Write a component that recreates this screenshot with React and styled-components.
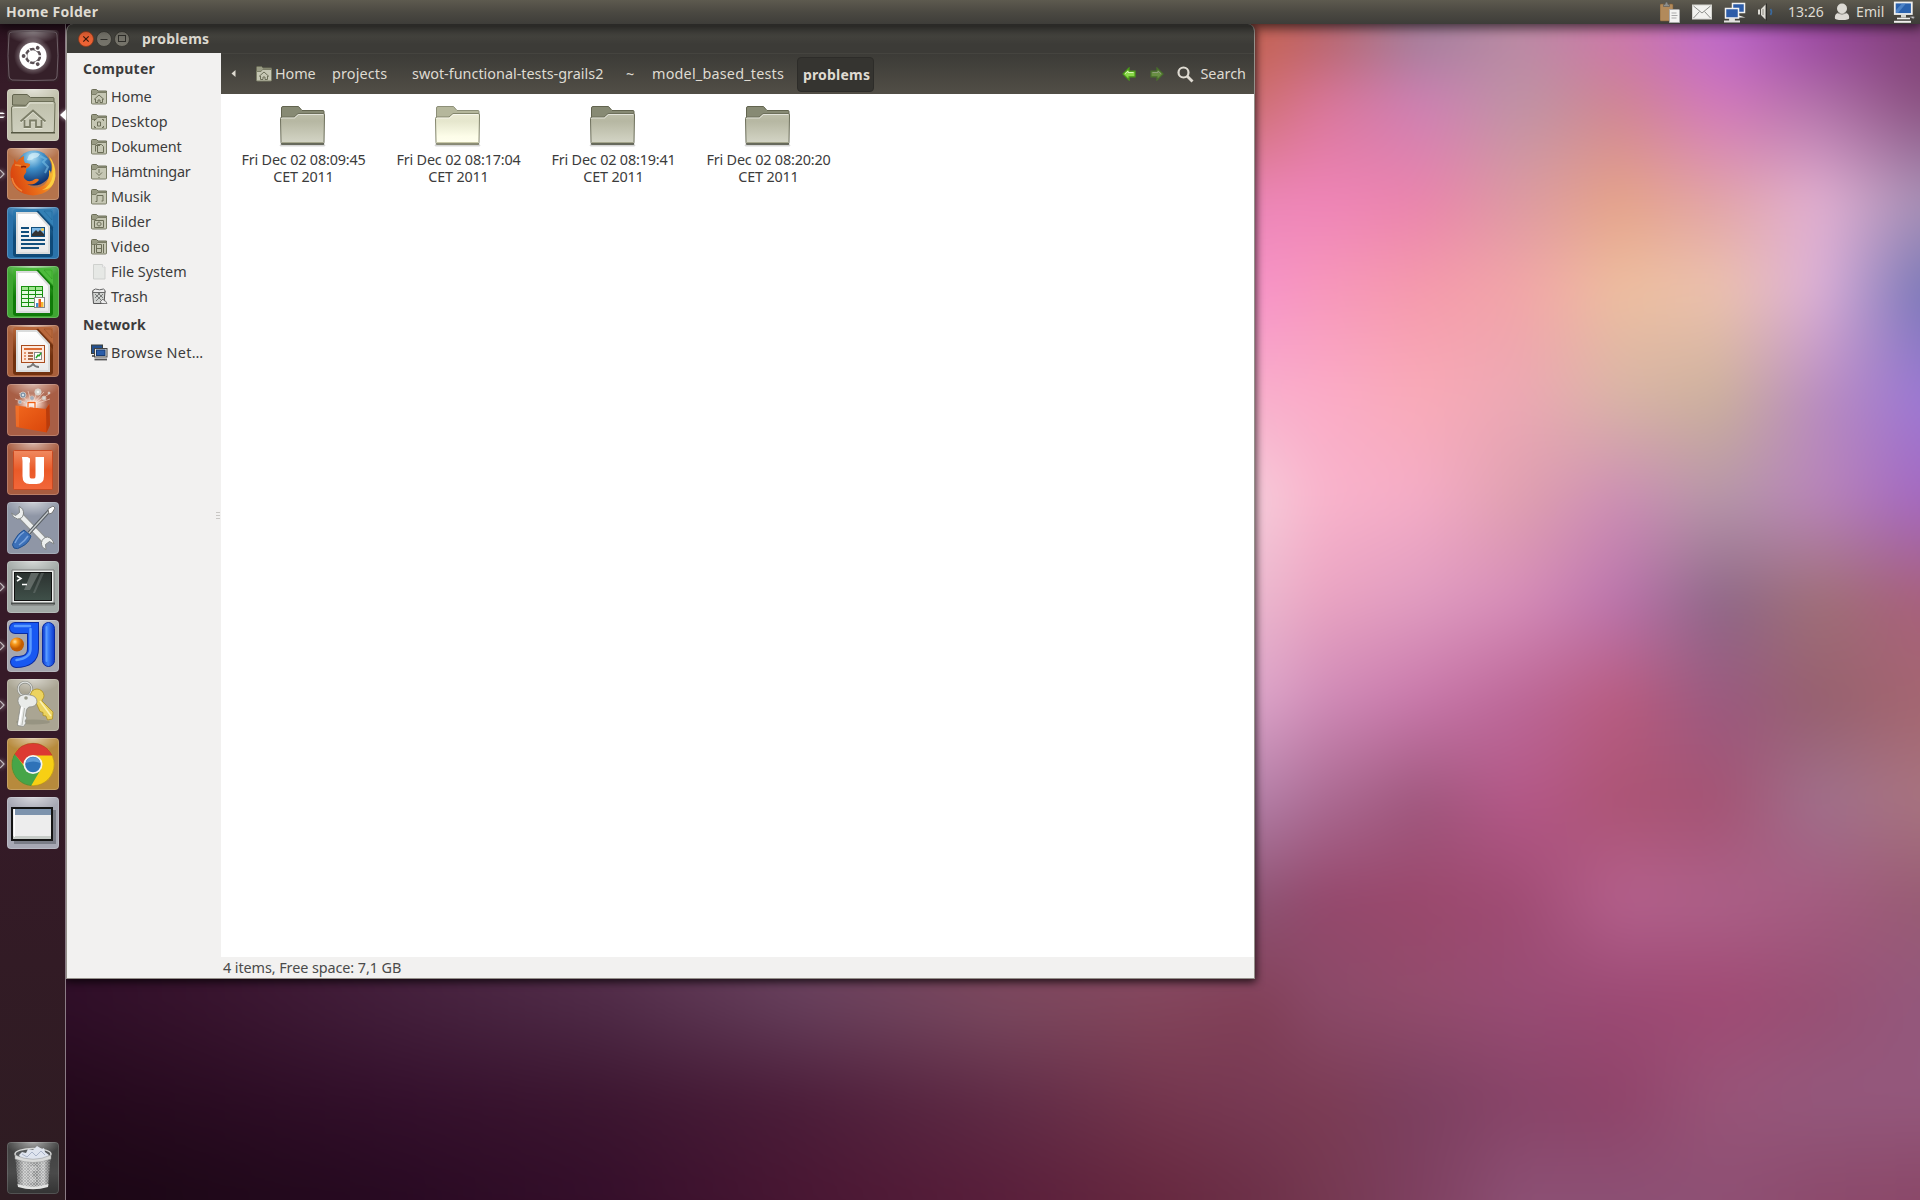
import React from "react";
import styled, { createGlobalStyle } from "styled-components";

const Global = createGlobalStyle`
  *, *::before, *::after { box-sizing: border-box; }
  html, body { margin: 0; padding: 0; overflow: hidden; background: #2a0f22; }
  body { font-family: "Noto Sans", "Open Sans", sans-serif; font-size: 14.4px; color: #3c3c3c; }
  svg { display: block; flex: none; }
`;

/* ---------- Wallpaper ---------- */

const COLS = [0, 200, 400, 600, 800, 1000, 1160, 1260, 1320, 1420, 1520, 1620, 1720, 1820, 1920];
const MESH = [
  [40, "200818 34102c 4a2040 603050 704060 803850 a85050 c86454 b9646a a37f9c bb8aa4 cc78a8 be6acb 9a48a0 7f4076"],
  [100, "200818 34102c 4a2040 603050 704060 803850 b86060 cf7072 d97597 cc80b4 bd93a5 cf8494 d277bc b070a8 8a5080"],
  [200, "200818 34102c 4a2040 603050 704060 803850 e080b0 ec86b6 ef84b8 ea84ac dc9aa2 e5a388 e2a4a8 e2b0d2 a890b4"],
  [290, "200818 34102c 4a2040 603050 704060 803850 f090c0 f794c8 f797bc f59aac f2a6a8 eebf9f ecc2ae dcb0d8 7a78b8"],
  [400, "200818 34102c 4a2040 603050 704060 803850 f0b0cc f9b0cc fbacc8 f9abb8 eca8b4 d8b4a6 cbb09c b98cc0 9c78d4"],
  [500, "200818 34102c 4a2040 603050 704060 803850 f0ccda f6ccda f9b4cc f4acc6 dfa0b0 cc8eb4 b596a8 b884b8 a468c0"],
  [600, "200818 34102c 4a2040 603050 704060 803850 e0b0ce ecb8ce eaa4c2 e09cc0 d68cb8 ba74ac 8e6888 a07078 a8607c"],
  [700, "200818 34102c 4a2040 603050 704060 803850 d0a0c8 dca4c8 d08cb8 c878aa bc6898 b85c80 9a5a80 96606e a46670"],
  [800, "200818 34102c 4a2040 603050 704060 803850 b07ca0 b480a8 ac6c94 a0587e b45888 ac5474 a45474 a0708c a87480"],
  [900, "2a0c24 3a1230 4a2040 603050 704060 803850 8c5070 8e5474 94486c 9a486c a04c74 b4608c ac6088 a45c80 985c74"],
  [1000, "2c0c26 38142e 44203c 502c48 67405c 7b4a60 84465c 824058 8a4a68 924c6c 984c74 9c4a74 a04a74 985074 94587c"],
  [1100, "200818 2a0c22 34102c 3c1630 4c1e3a 602c46 74364e 783a54 7c3c54 7c4060 884468 90446a 985478 94587c 94587c"],
  [1200, "180512 1e0818 280a22 340e2a 481632 581e3a 66283f 6c3048 743850 7e4060 8c5074 8c5074 8e5074 8c4a6c 8a4868"],
];

const WallpaperSvg = styled.svg`
  position: absolute;
  inset: 0;
`;

function Wallpaper() {
  return (
    <WallpaperSvg width="1920" height="1200" viewBox="0 0 1920 1200">
      <defs>
        <filter id="soft" x="0" y="0" width="1" height="1" colorInterpolationFilters="sRGB">
          <feGaussianBlur stdDeviation="20" />
        </filter>
        {MESH.map(([y, colors], i) => {
          const prev = i ? MESH[i - 1][0] : -100;
          return (
            <React.Fragment key={y}>
              <linearGradient id={`row${i}`} gradientUnits="userSpaceOnUse" x1="0" x2="1920" y1="0" y2="0">
                {colors.split(" ").map((c, k) => (
                  <stop key={k} offset={COLS[k] / 1920} stopColor={`#${c}`} />
                ))}
              </linearGradient>
              <linearGradient id={`fade${i}`} gradientUnits="userSpaceOnUse" x1="0" x2="0" y1={prev} y2={y}>
                <stop offset="0" stopColor="#fff" stopOpacity={i ? 0 : 1} />
                <stop offset="1" stopColor="#fff" />
              </linearGradient>
              <mask id={`m${i}`} maskUnits="userSpaceOnUse" x="-100" y={prev} width="2120" height={1400 - prev}>
                <rect x="-100" y={prev} width="2120" height={1400 - prev} fill={`url(#fade${i})`} />
              </mask>
            </React.Fragment>
          );
        })}
      </defs>
      <g filter="url(#soft)">
        {MESH.map(([y], i) => {
          const prev = i ? MESH[i - 1][0] : -100;
          return (
            <rect key={y} x="-100" y={prev} width="2120" height={1400 - prev} fill={`url(#row${i})`} mask={`url(#m${i})`} />
          );
        })}
      </g>
    </WallpaperSvg>
  );
}

/* ---------- Shell ---------- */

const Screen = styled.div`
  position: relative;
  width: 1920px;
  height: 1200px;
  overflow: hidden;
  display: flex;
  flex-direction: column;
`;

const Panel = styled.header`
  position: relative;
  z-index: 3;
  height: 24px;
  flex: none;
  display: flex;
  align-items: center;
  padding: 0 5px 0 6px;
  background: linear-gradient(#5d5a4f, #4b4942 50%, #3e3d39);
  color: #dfdbd2;
  box-shadow: 0 2px 12px 2px rgba(0, 0, 0, 0.65);
`;

const Label = styled.span`
  white-space: nowrap;
  line-height: ${(p) => p.$lh || 20}px;
  font-weight: ${(p) => (p.$bold ? 700 : 400)};
  font-size: ${(p) => p.$size || 14.4}px;
  letter-spacing: ${(p) => p.$ls || 0}px;
`;

const Tray = styled.div`
  margin-left: auto;
  display: flex;
  align-items: center;
`;

const TrayItem = styled.div`
  display: flex;
  align-items: center;
  gap: 6px;
  margin-left: ${(p) => p.$gap}px;
  width: ${(p) => p.$w}px;
`;

const Body = styled.div`
  position: relative;
  flex: 1;
  display: flex;
  align-items: flex-start;
`;

const Launcher = styled.nav`
  position: relative;
  z-index: 1;
  width: 66px;
  height: 1176px;
  flex: none;
  display: flex;
  flex-direction: column;
  gap: 7px;
  padding: 6px 0 6px;
  background: linear-gradient(#2b121f 0, #361b28 60px, #361a28 700px, #2e1c22 1176px);
  border-right: 1px solid #8b7c85;
`;

const Slot = styled.div`
  position: relative;
  height: 52px;
  flex: none;
  padding-left: 7px;
  margin-top: ${(p) => (p.$last ? "auto" : "0")};
`;

const Tile = styled.div`
  width: 52px;
  height: 52px;
  border-radius: 4px;
  overflow: hidden;
  background: radial-gradient(ellipse 28px 14px at 50% 0, rgba(255, 255, 255, 0.55), rgba(255, 255, 255, 0)), ${(p) => p.$bg};
  box-shadow: inset 0 0 0 1px ${(p) => p.$edge || "rgba(255,255,255,.2)"};
`;

const Marker = styled.svg`
  position: absolute;
  top: 16px;
  left: ${(p) => p.$x}px;
  filter: drop-shadow(0 0 2px rgba(255, 255, 255, 0.8));
`;

/* ---------- Window ---------- */

const Window = styled.main`
  width: 1189px;
  height: 955px;
  display: flex;
  flex-direction: column;
  border: 1px solid #94908a;
  border-top: 0;
  border-radius: 7px 7px 0 0;
  background: #f2f1f0;
  box-shadow: 0 2px 9px 1px rgba(0, 0, 0, 0.75);
  overflow: hidden;
`;

const TitleBar = styled.div`
  height: 29px;
  flex: none;
  display: flex;
  align-items: center;
  padding: 1px 0 0 11px;
  color: #dfdbd2;
  background: linear-gradient(#504f4a 1px, #474641 2px, #45443f 12px, #3c3b37 20px);
`;

const Buttons = styled.div`
  display: flex;
  gap: 2px;
  margin-right: 12px;
`;

const Columns = styled.div`
  flex: 1;
  display: flex;
`;

const Sidebar = styled.aside`
  position: relative;
  width: 154px;
  flex: none;
  padding: 3px 0 0;
  display: flex;
  flex-direction: column;
  background: #f2f1f0;
`;

const Heading = styled.div`
  height: ${(p) => p.$h}px;
  padding-left: 16px;
  padding-bottom: ${(p) => p.$pb || 0}px;
  display: flex;
  align-items: center;
`;

const Place = styled.div`
  height: 25px;
  padding-left: 24px;
  display: flex;
  align-items: center;
  gap: 3px;
`;

const Grip = styled.svg`
  position: absolute;
  right: 1px;
  top: 459px;
`;

const MainPane = styled.section`
  flex: 1;
  display: flex;
  flex-direction: column;
`;

const Toolbar = styled.div`
  height: 41px;
  flex: none;
  display: flex;
  align-items: center;
  color: #dfdbd2;
  background: linear-gradient(#3c3b37, #514e46 39px, #514e46 40px, #3c3b37 40px);
  border-top: 1px solid #45443f;
`;

const Crumb = styled.div`
  display: flex;
  align-items: center;
  gap: 2px;
  width: ${(p) => p.$w}px;
`;

const ActiveCrumb = styled.div`
  width: 77px;
  height: 35px;
  display: flex;
  align-items: center;
  justify-content: center;
  padding: 2px 0 0 2px;
  border-radius: 4px;
  background: #353430;
  border: 1px solid #2d2c29;
`;

const Actions = styled.div`
  margin-left: auto;
  display: flex;
  align-items: center;
  padding-right: 8px;
`;

const Files = styled.div`
  flex: 1;
  display: flex;
  align-items: flex-start;
  padding: 11px 0 0 5px;
  background: #fff;
`;

const FileItem = styled.div`
  width: 155px;
  display: flex;
  flex-direction: column;
  align-items: center;
  text-align: center;
  gap: 2px;

  svg {
    margin-right: 3px;
  }
`;

const StatusBar = styled.div`
  height: 21px;
  flex: none;
  display: flex;
  align-items: center;
  padding: 0 0 0 2px;
  background: #f2f1f0;
  color: #4a4a4a;
`;

/* ---------- Launcher artwork ---------- */

const Art = ({ children }) => (
  <svg width="52" height="52" viewBox="0 0 52 52">
    {children}
  </svg>
);

const Dash = () => (
  <Art>
    <defs>
      <radialGradient id="dashGlow">
        <stop offset=".5" stopColor="#fff" stopOpacity=".45" />
        <stop offset="1" stopColor="#fff" stopOpacity="0" />
      </radialGradient>
    </defs>
    <path d="M5 2Q26 0 47 2Q50 2 50 5Q52 26 50 46Q50 49 47 50Q26 51 5 50Q2 49 2 46Q0 26 2 5Q2 2 5 2z" fill="none" stroke="#6f6068" />
    <circle cx="26" cy="26" r="19" fill="url(#dashGlow)" />
    <circle cx="26" cy="26" r="13.6" fill="#fff" />
    <circle cx="26" cy="26" r="7" fill="none" stroke="#5a5055" strokeWidth="2.600" />
    {[0, 120, 240].map((a) => (
      <g key={a} transform={`rotate(${a} 26 26)`}>
        <circle cx="17" cy="26" r="3" fill="#fff" />
        <circle cx="16.600" cy="26" r="1.900" fill="#5a5055" />
        <path d="M30 26h7" stroke="#fff" strokeWidth="1.3" />
      </g>
    ))}
  </Art>
);

const HomeFolder = () => (
  <Art>
    <defs>
      <linearGradient id="hf" x2="0" y2="1">
        <stop stopColor="#bfc0ab" />
        <stop offset="1" stopColor="#cfd0bf" />
      </linearGradient>
    </defs>
    <path d="M5.5 16V7q0-1.500 1.500-1.500h13l3.500 3h22.500q1 0 1 1V17z" fill="#96977f" stroke="#63654f" />
    <path d="M4.500 19q0-2 2-2h12l3.500-4.500h24q2 0 2 2l-.7 27.500q0 1.500-1.500 1.500H6.500q-1.500 0-1.500-1.500z" fill="url(#hf)" stroke="#6d6f58" />
    <path d="M6 19.500q0-1 1.500-1h12l3.500-4.500h23" fill="none" stroke="#e5e6d8" />
    <path d="M4 43.800h44" stroke="#555742" strokeWidth="1.400" />
    <path d="M13.500 32.500L26 21.500l12.500 11M17.500 31v7h5.500v-6.500h6v6.500h5.500v-7" fill="none" stroke="#e3e4d6" strokeWidth="1.800" transform="translate(0 1)" />
    <path d="M13.500 32.500L26 21.500l12.500 11M17.500 31v7h5.500v-6.500h6v6.500h5.500v-7" fill="none" stroke="#7b7d67" strokeWidth="1.800" />
  </Art>
);

const Firefox = () => (
  <Art>
    <defs>
      <radialGradient id="globe" cx=".45" cy=".2" r=".8">
        <stop stopColor="#b9e4f5" />
        <stop offset=".4" stopColor="#3f8fc8" />
        <stop offset="1" stopColor="#0b2a68" />
      </radialGradient>
      <linearGradient id="fox" x1="0" x2="1" y1=".6" y2=".3">
        <stop stopColor="#d8410e" />
        <stop offset=".6" stopColor="#ee7a1c" />
        <stop offset="1" stopColor="#fcd03c" />
      </linearGradient>
    </defs>
    <circle cx="27" cy="20" r="17.500" fill="url(#globe)" />
    <path d="M22 7q5-4 11-1q-2 4-6 4q-2 3-7 2z" fill="#d5effa" opacity=".7" />
    <path d="M33 8l6 3-3 3 5 5-3 6" fill="none" stroke="#79bfe4" opacity=".6" strokeWidth="2" />
    <path d="M42 8q7 8 6.500 20Q46 46 26 47.500Q6 46 3.500 28Q3 19 7 15l0-4q1 1 3 3q3-5 7-6q-1 4 1 7q3 0 5 1q1 2-4 5q1 3-1 5q-3 3 1 6q4 3 9-1q3-1 4 1q-5 6-12 4q8 7 17 1q6-5 5-15q2 1 2 4q3-8-1-15z" fill="url(#fox)" />
    <path d="M42 9q6 9 4 18q-2 11-11 15q13-1 13-15q-1-12-6-18z" fill="#fbd644" opacity=".85" />
    <path d="M8 17q3 0 6 1M5 30q2 9 10 13" fill="none" stroke="#f5a04a" strokeWidth="1.500" opacity=".7" />
    <path d="M14 19q3-1 5 0" stroke="#8c2204" strokeWidth="1.500" fill="none" />
  </Art>
);

const Libre = ({ id, dark, light, children }) => (
  <Art>
    <defs>
      <linearGradient id={`lb${id}`} x2="0" y2="1">
        <stop stopColor={light} />
        <stop offset=".6" stopColor={dark} />
      </linearGradient>
      <linearGradient id={`pg${id}`} x2="0" y2="1">
        <stop stopColor="#fff" />
        <stop offset="1" stopColor="#e9e9e9" />
      </linearGradient>
    </defs>
    <rect x="6" y="2" width="40" height="48" rx="3" fill={`url(#lb${id})`} />
    <path d="M30 2h13q3 0 3 3v14z" fill={light} />
    <path d="M37 4h6.500q1.500 0 1.500 1.500V13z" fill={light} stroke={dark} strokeOpacity=".25" />
    <path d="M31 3.500l15 17v4L29 5z" fill={dark} />
    <path d="M9 5h21l13 14v28H9z" fill="#dadcdc" />
    <path d="M11 7h18.500L41 20v25H11z" fill={`url(#pg${id})`} />
    {children}
  </Art>
);

const Writer = () => (
  <Libre id="w" dark="#0f4a78" light="#3380b5">
    <path d="M14 21h8M14 25h8M14 29h8M14 33h24M14 37h24M14 41h18" stroke="#124f7c" strokeWidth="2" />
    <rect x="24.500" y="20.500" width="13" height="9" fill="#7db8e6" stroke="#124f7c" />
    <path d="M25 29v-2l4-4 2 2 2-2 4 4v2z" fill="#333" />
    <circle cx="35.500" cy="22.500" r="1.500" fill="#f5c84a" />
  </Libre>
);

const Calc = () => (
  <Libre id="c" dark="#0f7a08" light="#4dbb3c">
    <rect x="14" y="20" width="22" height="21" fill="#189010" />
    {[0, 1, 2, 3, 4].map((r) =>
      [0, 1, 2].map((c) => (
        <rect key={`${r}${c}`} x={15 + c * 7} y={21 + r * 4} width="6" height="3" fill={r ? "#e4fadf" : "#a0e690"} />
      ))
    )}
    <rect x="27.500" y="31.500" width="10" height="10" fill="#fff" stroke="#888" />
    <path d="M29 41v-4h2.500v4z" fill="#3d8fd0" />
    <path d="M31.500 41v-8H34v8z" fill="#e85b1c" />
    <path d="M34 41v-5h2.500v5z" fill="#f5b731" />
  </Libre>
);

const Impress = () => (
  <Libre id="i" dark="#71310f" light="#b9683c">
    <rect x="14.500" y="20.500" width="23" height="17" fill="#fde9dd" stroke="#a94c1e" />
    <path d="M17 24h18" stroke="#dd6b32" strokeWidth="2" />
    <path d="M17 28h2M17 31h2M17 34h2" stroke="#e79870" strokeWidth="2" />
    <path d="M21 28h5M21 31h5M21 34h5" stroke="#93421a" strokeWidth="1.600" />
    <rect x="27.500" y="27.500" width="7" height="7" fill="#fff" stroke="#888" />
    <path d="M29 33l2-3 1 1 2-3" fill="none" stroke="#26a326" strokeWidth="1.400" />
    <path d="M26 38v1M20 42q4 0 6-3q2 3 6 3" fill="none" stroke="#777" strokeWidth="1.800" />
  </Libre>
);

const Software = () => (
  <Art>
    <defs>
      <radialGradient id="burst">
        <stop stopColor="#fff" />
        <stop offset=".5" stopColor="#ffe3d6" stopOpacity=".7" />
        <stop offset="1" stopColor="#ffd8c8" stopOpacity="0" />
      </radialGradient>
      <linearGradient id="bag" x2="1" y2="1">
        <stop stopColor="#f2681e" />
        <stop offset="1" stopColor="#d8450a" />
      </linearGradient>
    </defs>
    <ellipse cx="25" cy="20" rx="16" ry="11" fill="url(#burst)" />
    <path d="M25 21L8 15M25 21L12 9M25 21L21 7M25 21L31 6M25 21L42 10M25 21L43 15M25 21L37 8" stroke="#ffe9dd" opacity=".55" />
    {[[16, 11, 3, "#7d93a8"], [31, 8, 3.200, "#d6d3cd"], [13, 18, 1.800, "#6f89a2"], [25, 14, 2, "#7b8aa0"], [37, 14, 2, "#cdc8bf"], [20, 18, 1.500, "#b99b84"], [42, 9, 1, "#ccc"]].map(([x, y, r, c]) => (
      <g key={x}>
        <circle cx={x} cy={y} r={r} fill={c} stroke="#d8cdc5" strokeWidth=".8" />
        <circle cx={x} cy={y} r={r / 2.5} fill="#fff" opacity=".7" />
      </g>
    ))}
    <path d="M8.500 21.500L39 25l3-5 .7 21-3 7.500L9 43z" fill="url(#bag)" />
    <path d="M39 25l3.500-5 .5 21-3.500 7.500z" fill="#b93c0c" />
    <path d="M8.500 21.500L12 22v21l-3-.5z" fill="#f58440" opacity=".4" />
    <path d="M21 24v-5.500h7V24" fill="none" stroke="#fff" strokeWidth="2.600" />
    <path d="M21 24v-5.500h7V24" fill="none" stroke="#ef5e14" strokeWidth="1.300" />
  </Art>
);

const UbuntuOne = () => (
  <Art>
    <defs>
      <linearGradient id="uo" x2="0" y2="1">
        <stop stopColor="#f08a60" />
        <stop offset=".5" stopColor="#ea5a28" />
        <stop offset="1" stopColor="#f2673a" />
      </linearGradient>
    </defs>
    <rect x="6.500" y="7.500" width="39" height="39" rx="1" fill="url(#uo)" stroke="#c94a22" />
    <path d="M15 14h5.500l2.500 1.500v4.500l-.4-1v14q0 2.500 1.600 2.500H27q1.500 0 1.500-2.500V14H37v19q0 8-7.500 8h-7q-7 0-7-8V18z" fill="#fff" />
  </Art>
);

const Tools = () => (
  <Art>
    <path d="M13 13L39 40" stroke="#8e9192" strokeWidth="6.600" />
    <path d="M13 13L39 40" stroke="#eceeee" strokeWidth="4.600" />
    <path d="M12 4.500q5 2 4.500 7.500q-1 5-6 5q-5-1-6-6l4 2.500 4-3z" fill="#eceeee" stroke="#808485" />
    <path d="M39 47.500q-5-2-4.500-7q1-5 6-5.500q5 1 6.500 7l-4.500-2.500-4 3z" fill="#eceeee" stroke="#808485" />
    <path d="M42 9L22 31" stroke="#555b60" strokeWidth="3.400" />
    <path d="M42 9L22 31" stroke="#c5cacd" strokeWidth="1.400" />
    <path d="M41 7l5-3 2 2-3 5-3 1z" fill="#fff" stroke="#777" />
    <path d="M17 28l7 6q-2 7-9 10.500q-5 3.500-8 1.500q-3-3 0-7q4-8 10-11z" fill="#3c70b8" stroke="#22508e" />
    <path d="M17 30q-6 4-9 11M21 34q-3 5-9 9" fill="none" stroke="#7ba4dc" strokeWidth="1.500" />
  </Art>
);

const Terminal = () => (
  <Art>
    <defs>
      <linearGradient id="tm" x2="0" y2="1">
        <stop stopColor="#2c3230" />
        <stop offset="1" stopColor="#3f5049" />
      </linearGradient>
    </defs>
    <path d="M5 9h42v35H5z" fill="#eceeec" stroke="#777" />
    <path d="M4 42.500h44" stroke="#4b4f4d" strokeWidth="2" />
    <rect x="7.500" y="11.500" width="37" height="28" fill="url(#tm)" stroke="#111" />
    <path d="M24 12h8L23 29h-6z" fill="#88908c" opacity=".55" />
    <path d="M34 12h3l-9 20h-2z" fill="#88908c" opacity=".35" />
    <path d="M10 15l4 2.500-4 2.500M15 23.500h5" fill="none" stroke="#fff" strokeWidth="1.500" />
  </Art>
);

const Idea = () => (
  <Art>
    <defs>
      <linearGradient id="idb" x2="1">
        <stop stopColor="#123fd0" />
        <stop offset=".45" stopColor="#3b82ff" />
        <stop offset="1" stopColor="#0b35c8" />
      </linearGradient>
      <radialGradient id="ball" cx=".35" cy=".3">
        <stop stopColor="#ffe6a8" />
        <stop offset=".4" stopColor="#f99b1d" />
        <stop offset="1" stopColor="#c35c00" />
      </radialGradient>
    </defs>
    <path d="M8 8h18v21q0 13-17 13" fill="none" stroke="#0a2aa0" strokeWidth="12" strokeLinecap="round" />
    <path d="M8 8h18v21q0 13-17 13" fill="none" stroke="#1858f2" strokeWidth="10" strokeLinecap="round" />
    <path d="M8 6h15M23.500 9v20q0 9-14 11" fill="none" stroke="#5b9bff" strokeWidth="2.500" strokeLinecap="round" />
    <rect x="35.500" y="2.500" width="12" height="44" rx="6" fill="url(#idb)" stroke="#0a2aa0" />
    <path d="M39.500 7v34" stroke="#5b9bff" strokeWidth="2" strokeLinecap="round" />
    <circle cx="10" cy="24.500" r="7" fill="url(#ball)" />
  </Art>
);

const Keys = () => (
  <Art>
    <ellipse cx="26" cy="43" rx="17" ry="2.500" fill="#8b8877" opacity=".6" />
    <circle cx="18" cy="10" r="6.800" fill="none" stroke="#8b8d88" strokeWidth="2.400" />
    <circle cx="18" cy="10" r="6.800" fill="none" stroke="#dfe1dd" strokeWidth="1.200" />
    <path d="M25 12q5-4 10 0q4 5 0 9l0 1 11 11-.5 7-5 1-1.500-4-3-.5 0-3-3-1-4-9q-7 0-7-5z" fill="#ecd35e" stroke="#ad8f22" strokeWidth=".8" />
    <path d="M33 22l11 15" stroke="#fbf2b4" strokeWidth="1.500" />
    <path d="M13 17q5-3 10-1 7 1 7 7-1 5-8 5-2 1-2.500 3l-1 6 1.500 2-2 3 1 2-2.500 3.500-6-1 1-8 2-11q-5-6-.5-10.500z" fill="#e9ebe9" stroke="#8b8d88" strokeWidth=".8" />
    <path d="M15 28l-3 18" stroke="#fff" strokeWidth="1.800" />
    <path d="M17.500 29l-2.500 17" stroke="#b5b7b2" />
    <circle cx="19" cy="19" r="1.800" fill="#999a8a" />
  </Art>
);

const Chrome = () => (
  <Art>
    <circle cx="26" cy="26.500" r="21.500" fill="#f7cf14" />
    <path d="M7.600 15.500A21.500 21.500 0 0 0 24 47.900L34 31 26 26.500 19 31z" fill="#46a548" />
    <path d="M7.400 16A21.500 21.500 0 0 1 26 5a21.500 21.500 0 0 1 19.500 12.500H26q-8 0-9.500 9z" fill="#dc3a32" />
    <circle cx="26" cy="26.500" r="9.500" fill="#f4f4f4" />
    <circle cx="26" cy="26.500" r="7.800" fill="#2e72b8" />
    <path d="M18.500 25a7.800 7.800 0 0 1 15 0q-7-3-15 0z" fill="#5d9bd6" />
    <circle cx="26" cy="26.500" r="21.200" fill="none" stroke="#7a5a20" strokeOpacity=".35" />
  </Art>
);

const Workspace = () => (
  <Art>
    <rect x="7" y="13" width="42" height="34" fill="#555a62" opacity=".55" />
    <rect x="5" y="11" width="40" height="32" fill="#ededed" stroke="#141414" strokeWidth="2" />
    <rect x="7" y="12" width="37" height="6" fill="#7d93ad" />
    <rect x="6" y="39" width="38" height="3" fill="#c7ccc8" />
    <path d="M7.500 12v28" stroke="#fff" />
  </Art>
);

const TrashCan = () => (
  <Art>
    <defs>
      <pattern id="wire" width="3" height="3" patternUnits="userSpaceOnUse">
        <rect width="3" height="3" fill="#b9bab9" />
        <path d="M0 0l3 3M3 0L0 3" stroke="#76787a" strokeWidth=".7" />
      </pattern>
      <linearGradient id="shine" x2="1">
        <stop stopColor="#222" stopOpacity=".5" />
        <stop offset=".25" stopColor="#fff" stopOpacity=".4" />
        <stop offset=".6" stopColor="#fff" stopOpacity=".05" />
        <stop offset=".8" stopColor="#fff" stopOpacity=".4" />
        <stop offset="1" stopColor="#222" stopOpacity=".5" />
      </linearGradient>
    </defs>
    <ellipse cx="26" cy="12" rx="18" ry="5.500" fill="#55585a" stroke="#d5d6d5" strokeWidth="1.500" />
    <path d="M12 13l3-3 4 1 2-4 5 1 4-4 5 3 2-1 1 4 4 3-2 4q-14 5-26 0z" fill="#dfe4ee" />
    <path d="M15 12l5 3 5-5 4 4 5-5 4 4" fill="none" stroke="#aab4c8" />
    <path d="M8.500 16q17.500 7 35 0L41 44q-15 5.500-30 0z" fill="url(#wire)" />
    <path d="M8.500 16q17.500 7 35 0L41 44q-15 5.500-30 0z" fill="url(#shine)" />
    <path d="M8 13q18 8.500 36 0v4q-18 7-36 0z" fill="#d9dad9" stroke="#8d8f8f" strokeWidth=".5" />
    <path d="M10.500 42q15 5.500 31 0l-.5 3q-15 4.500-30 0z" fill="#e3e4e3" />
    <path d="M23 24h7v5h-5v6h4v5h-6z" fill="#fff" opacity=".25" />
  </Art>
);

const APPS = [
  { art: Dash, bg: "#352029", edge: "transparent" },
  { art: HomeFolder, bg: "#c3c2ad", active: true },
  { art: Firefox, bg: "#b5734c", running: true },
  { art: Writer, bg: "#2a72aa" },
  { art: Calc, bg: "#3fa532" },
  { art: Impress, bg: "#a85e3a" },
  { art: Software, bg: "#a85e45" },
  { art: UbuntuOne, bg: "#a85c40" },
  { art: Tools, bg: "#8f96a6" },
  { art: Terminal, bg: "#a3aaa7", running: true },
  { art: Idea, bg: "#a5a7b0", running: true },
  { art: Keys, bg: "#aaa593", running: true },
  { art: Chrome, bg: "#b78a3c", running: true },
  { art: Workspace, bg: "#a7a8b4" },
  { art: TrashCan, bg: "linear-gradient(#3f3f3f, #4a4a4a 60%, #333)", last: true, edge: "rgba(255,255,255,.15)" },
];

/* ---------- Small icons ---------- */

const GLYPHS = {
  home: "M3 10.500L8 6l5 4.500M4.500 10v3.500H7V11h2v2.500h2.500V10",
  desktop: "M3.500 7V5.500H5M11 5.500h1.500V7M12.500 12v1.500H11M5 13.500H3.500V12M6.500 12V8h3v4z",
  documents: "M4.500 12.500v-6H9M6.500 13.500v-8h4l2 2v6z",
  downloads: "M8 5v4M5 8.500l3 3 3-3M8 13v1",
  music: "M6 12.500V6.500h6V12M4.500 12.500H6M10.500 12H12",
  pictures: "M3.500 6.500h9v7h-9zM8 8a2 2 0 1 0 .1 0",
  video: "M3.500 5v9M12.500 5v9M5.500 5.500h5v8h-5zM5.500 9.500h5",
};

const SmallFolder = ({ kind }) => (
  <svg width="17" height="16" viewBox="0 0 17 16">
    <path d="M.5 14V1.500q0-1 1-1h4L7 2h8.500V14z" fill="#9a9c85" stroke="#6c6e58" />
    <path d="M.5 5.500H5L6.500 3.500h9V14q0 1-1 1h-13q-1 0-1-1z" fill="#c6c7b4" stroke="#7b7d67" />
    <path d={GLYPHS[kind]} fill="none" stroke="#6c6e58" />
  </svg>
);

const FileSystemIcon = () => (
  <svg width="17" height="16" viewBox="0 0 17 16">
    <path d="M2.500.5h9l2.500 2.500v12H2.500z" fill="#e6e8e5" stroke="#cfd1ce" />
    <path d="M11.500.5V3H14" fill="#fff" stroke="#d5d5d5" />
  </svg>
);

const TrashIcon = () => (
  <svg width="17" height="17" viewBox="0 0 17 17">
    <path d="M1.500 3h12.500L13 15.500H2.500z" fill="#d0d2d0" stroke="#555" />
    <path d="M4 6l7 7M7 5l5 5M12 6l-7 7M9 5l-5 5" stroke="#6e7070" strokeWidth=".9" />
    <path d="M1.500 4.500q0-3 3-3.500l4 .8 4-.8q2 .5 1.500 3.500z" fill="#ececec" stroke="#666" />
    <path d="M9 14l3-3 1 1.500q2 0 3 3H11z" fill="#eee" stroke="#666" strokeWidth=".8" />
  </svg>
);

const NetworkIcon = () => (
  <svg width="17" height="17" viewBox="0 0 17 17">
    <rect x=".5" y="1" width="11" height="8.500" fill="#24508e" stroke="#3c403b" />
    <path d="M1 12h5" stroke="#666" strokeWidth="2" />
    <rect x="3.500" y="4.500" width="12.500" height="8.500" fill="#e4e4e0" stroke="#444" />
    <rect x="5.500" y="6" width="8.500" height="5.500" fill="#2a5ca8" stroke="#173a70" />
    <path d="M3.500 15.500h12.500" stroke="#555" strokeWidth="1.800" />
  </svg>
);

const PLACES = [
  ["home", "Home", -0.1],
  ["desktop", "Desktop", 0.1],
  ["documents", "Dokument", -0.1],
  ["downloads", "Hämtningar", -0.22],
  ["music", "Musik", -0.05],
  ["pictures", "Bilder", 0.05],
  ["video", "Video", 0.2],
];

const BigFolder = ({ lit }) => (
  <svg width="48" height="44" viewBox="0 0 48 44">
    <defs>
      <linearGradient id={lit ? "bfl" : "bf"} x2="0" y2="1">
        <stop stopColor={lit ? "#ecebd4" : "#c0c1ad"} />
        <stop offset=".25" stopColor={lit ? "#e5e6cd" : "#b6b7a2"} />
        <stop offset=".75" stopColor={lit ? "#fdfde9" : "#cbccbb"} />
        <stop offset="1" stopColor={lit ? "#ffffef" : "#d5d6c8"} />
      </linearGradient>
    </defs>
    <path d="M3 40.200h43" stroke="#000" strokeOpacity=".16" strokeWidth="2.400" strokeLinecap="round" />
    <path d="M3.500 14V3q0-1.500 1.500-1.500h15.500L24 5.500h21q1 0 1 1V14z" fill={lit ? "#b5b79c" : "#878a74"} stroke={lit ? "#8d8f78" : "#62644f"} />
    <path d="M2.500 13.500q0-1.500 1.500-1.500h12l4-3.500h25q1.500 0 1.500 1.500l-.5 27.500q0 1.500-1 1.500H4q-1 0-1-1.500z" fill={`url(#${lit ? "bfl" : "bf"})`} stroke={lit ? "#83856c" : "#6d6f5b"} />
    <path d="M3.500 14q0-1 1-1h12l4-3.500h25" fill="none" stroke="#fff" strokeOpacity=".55" />
    <path d="M4 37.500h41" stroke={lit ? "#c9c9a8" : "#a5a68d"} />
    <path d="M3.200 39h42.800" stroke={lit ? "#7b7c66" : "#55574a"} strokeWidth="1.400" />
  </svg>
);

const ArrowIcon = ({ flip, dim }) => (
  <svg width="14" height="14" viewBox="0 0 14 14" opacity={dim ? 0.5 : 1}>
    <g transform={flip ? "translate(14 0) scale(-1 1)" : undefined}>
      <path d="M1 7l6-6V4.200h6v5.600H7V13z" fill="#8bd84a" stroke="#4a9a18" strokeWidth="1.200" />
      <path d="M3 6.800L6 4v1.500h5.500" fill="none" stroke="#d5f7b5" />
    </g>
  </svg>
);

const SearchIcon = () => (
  <svg width="17" height="17" viewBox="0 0 17 17">
    <circle cx="6.500" cy="6.500" r="5" fill="none" stroke="#dfdbd2" strokeWidth="2.200" />
    <path d="M10 10l5.500 5.500" stroke="#dfdbd2" strokeWidth="2.800" />
  </svg>
);

const WindowButton = ({ kind }) => (
  <svg width="16" height="16" viewBox="0 0 16 16">
    <circle cx="8" cy="8" r="7.500" fill={kind === "close" ? "#ec6335" : "#75736a"} stroke={kind === "close" ? "#8a3a1c" : "#35342f"} strokeWidth=".8" />
    {kind === "close" && <path d="M5.300 5.300l5.400 5.400M10.700 5.300l-5.400 5.400" stroke="#3c1a0d" strokeWidth="1.200" />}
    {kind === "min" && <path d="M4.500 8.500h7" stroke="#2f2e2a" />}
    {kind === "max" && <rect x="4.500" y="4.500" width="7" height="6" fill="none" stroke="#2f2e2a" />}
  </svg>
);

const ClipboardIcon = () => (
  <svg width="20" height="22" viewBox="0 0 20 22">
    <rect x="0" y="3" width="13" height="17" rx="1" fill="#b28a5b" stroke="#7d5c35" strokeWidth=".6" />
    <path d="M3.500 5.500V3.500H5q0-2.500 1.500-2.500T8 3.500h1.500v2z" fill="#8d8f8c" stroke="#555" strokeWidth=".6" />
    <path d="M9.500 8.500h9.500l.5.500v12.500h-10z" fill="#f4f4f2" stroke="#aaa" />
    <path d="M11.500 12h5M11.500 14.500h6M11.500 17h5" stroke="#aaa" />
  </svg>
);

const MailIcon = () => (
  <svg width="20" height="16" viewBox="0 0 20 16">
    <rect x=".5" y="1" width="19" height="14" fill="#f2f2ef" stroke="#d5d5d0" />
    <path d="M1.500 2l8.500 7 8.500-7M1.500 14l6-6.500M18.500 14l-6-6.500" fill="none" stroke="#8f908c" />
  </svg>
);

const NetTrayIcon = () => (
  <svg width="22" height="21" viewBox="0 0 22 21">
    <rect x="8.500" y="1.500" width="12" height="9" fill="#2d5ca8" stroke="#f2f2f2" strokeWidth="1.500" />
    <path d="M15 13.500l6.500 2H14z" fill="#eee" />
    <rect x="1.500" y="6.500" width="13" height="9.500" fill="#2d5ca8" stroke="#f2f2f2" strokeWidth="1.500" />
    <path d="M6 17h4v1.500H6zM0 19.500h16" stroke="#e2e2df" strokeWidth="1.800" />
  </svg>
);

const VolumeIcon = () => (
  <svg width="16" height="18" viewBox="0 0 16 18">
    <path d="M0 6.500h2v5H0zM3 6l4.500-4.500v15L3 12z" fill="#dedcd5" />
    <path d="M8.500.5v17" stroke="#2c2c28" />
    <path d="M12.500 6q2 3 0 6" fill="none" stroke="#3b6a9e" strokeWidth="1.600" />
    <path d="M5 6v6" stroke="#8c8a80" />
  </svg>
);

const UserIcon = () => (
  <svg width="16" height="18" viewBox="0 0 16 18">
    <circle cx="8" cy="5.500" r="5" fill="#dcdad4" />
    <path d="M.8 15q0-5 4-5.200h6.400q4 .2 4 5.200 0 2-7.200 2T.8 15z" fill="#dcdad4" />
    <path d="M3.500 10q4.500 2.500 9 0" stroke="#8f8d86" fill="none" />
  </svg>
);

const ComputerIcon = () => (
  <svg width="22" height="22" viewBox="0 0 22 22">
    <rect x="1.800" y="1.500" width="17" height="11.500" fill="#2a62ae" stroke="#f0f0ee" strokeWidth="1.800" />
    <path d="M3 9L9 2.500h4L5 12H3z" fill="#5c92d2" opacity=".7" />
    <path d="M8 14h5v2.500H8z" fill="#d5d5d0" />
    <path d="M4 17.500h13" stroke="#f0f0ee" strokeWidth="1.600" />
    <path d="M1 20.800h17" stroke="#f0f0ee" strokeWidth="2" />
    <path d="M17 16q2-1.500 4.500 0l-1 2z" fill="#ccc" stroke="#666" strokeWidth=".7" />
  </svg>
);

const FILES = ["08:09:45", "08:17:04", "08:19:41", "08:20:20"];

export default function App() {
  return (
    <Screen>
      <Global />
      <Wallpaper />
      <Panel>
        <Label $bold $size={14} $ls={0.28}>Home Folder</Label>
        <Tray>
          <TrayItem $w={20} $gap={0}><ClipboardIcon /></TrayItem>
          <TrayItem $w={20} $gap={12}><MailIcon /></TrayItem>
          <TrayItem $w={22} $gap={12}><NetTrayIcon /></TrayItem>
          <TrayItem $w={16} $gap={12}><VolumeIcon /></TrayItem>
          <TrayItem $w={36} $gap={14}><Label $size={14}>13:26</Label></TrayItem>
          <TrayItem $w={51} $gap={10}><UserIcon /><Label $size={14} $ls={0.1}>Emil</Label></TrayItem>
          <TrayItem $w={22} $gap={8}><ComputerIcon /></TrayItem>
        </Tray>
      </Panel>
      <Body>
        <Launcher>
          {APPS.map(({ art: Icon, bg, edge, active, running, last }, i) => (
            <Slot key={i} $last={last}>
              <Tile $bg={bg} $edge={edge}><Icon /></Tile>
              {active && (
                <>
                  <Marker $x={0} width="6" height="20"><path d="M0 7.500h3l2 1.500H0zM0 13l3 0 2-1.500H0z" fill="#fff" /></Marker>
                  <Marker $x={60} width="6" height="20"><path d="M6 4.500v11L0 10z" fill="#fff" /></Marker>
                </>
              )}
              {running && (
                <Marker $x={0} width="6" height="20"><path d="M0 6l4 4-4 4" fill="none" stroke="#c4bcc0" strokeWidth="1.200" /></Marker>
              )}
            </Slot>
          ))}
        </Launcher>
        <Window>
          <TitleBar>
            <Buttons>
              <WindowButton kind="close" />
              <WindowButton kind="min" />
              <WindowButton kind="max" />
            </Buttons>
            <Label $bold $size={14} $ls={0.2}>problems</Label>
          </TitleBar>
          <Columns>
            <Sidebar>
              <Heading $h={28} $pb={2}><Label $bold $size={14} $ls={0.25}>Computer</Label></Heading>
              {PLACES.map(([kind, name, ls]) => (
                <Place key={kind}><SmallFolder kind={kind} /><Label $ls={ls}>{name}</Label></Place>
              ))}
              <Place><FileSystemIcon /><Label>File System</Label></Place>
              <Place><TrashIcon /><Label>Trash</Label></Place>
              <Heading $h={31}><Label $bold $size={14} $ls={0.2}>Network</Label></Heading>
              <Place><NetworkIcon /><Label $ls={0.3}>Browse Net…</Label></Place>
              <Grip width="4" height="8"><path d="M0 .5h4M0 3.500h4M0 6.500h4" stroke="#c9c7c4" /></Grip>
            </Sidebar>
            <MainPane>
              <Toolbar>
                <Crumb $w={35}><svg width="35" height="10"><path d="M14.500 1v7L10.500 4.500z" fill="#dfdbd2" /></svg></Crumb>
                <Crumb $w={76}><SmallFolder kind="home" /><Label $ls={-0.1}>Home</Label></Crumb>
                <Crumb $w={80}><Label $ls={0.15}>projects</Label></Crumb>
                <Crumb $w={214}><Label>swot-functional-tests-grails2</Label></Crumb>
                <Crumb $w={26}><Label>~</Label></Crumb>
                <Crumb $w={145}><Label $ls={0.2}>model_based_tests</Label></Crumb>
                <ActiveCrumb><Label $bold $size={14} $ls={0.2}>problems</Label></ActiveCrumb>
                <Actions>
                  <ArrowIcon />
                  <svg width="14" height="1" />
                  <ArrowIcon flip dim />
                  <svg width="13" height="1" />
                  <SearchIcon />
                  <svg width="6" height="1" />
                  <Label>Search</Label>
                </Actions>
              </Toolbar>
              <Files>
                {FILES.map((time, i) => (
                  <FileItem key={time}>
                    <BigFolder lit={i === 1} />
                    <Label $lh={17} $ls={-0.17}>Fri Dec 02 {time}<br />CET 2011</Label>
                  </FileItem>
                ))}
              </Files>
              <StatusBar><Label $ls={-0.08}>4 items, Free space: 7,1 GB</Label></StatusBar>
            </MainPane>
          </Columns>
        </Window>
      </Body>
    </Screen>
  );
}
